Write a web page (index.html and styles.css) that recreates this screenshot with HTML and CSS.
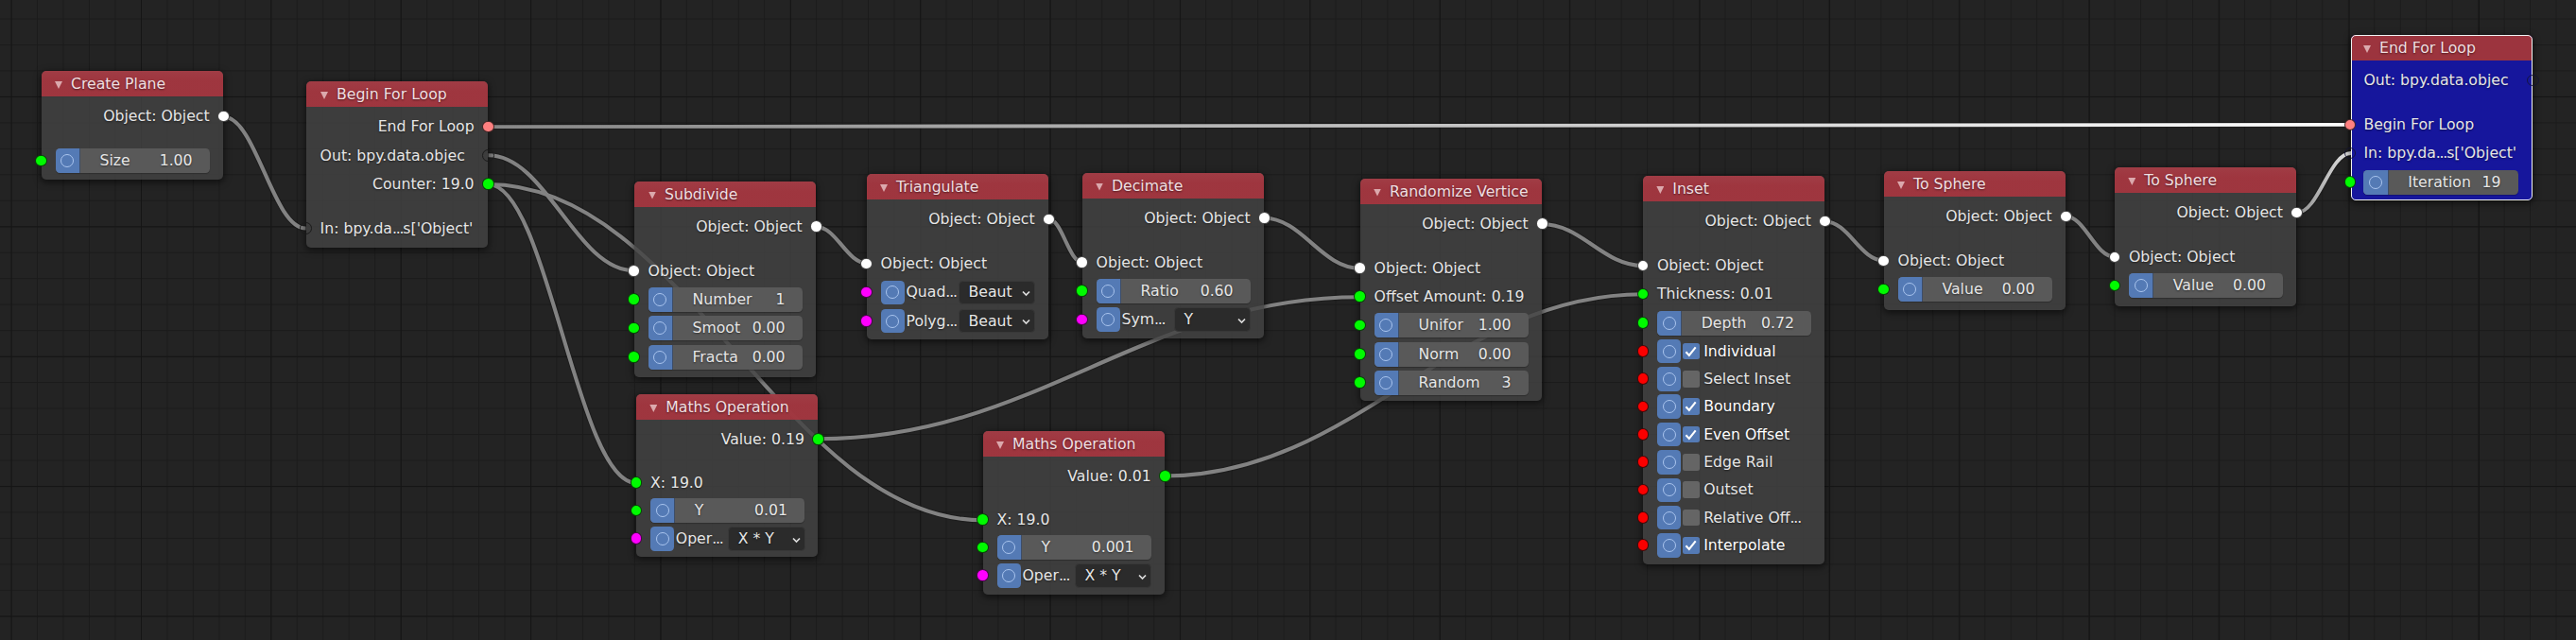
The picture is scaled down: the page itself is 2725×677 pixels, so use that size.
FILE: index.html
```
<!DOCTYPE html>
<html lang="en">
<head>
<meta charset="utf-8">
<title>Node Editor</title>
<link rel="stylesheet" href="styles.css">
</head>
<body>
<main class="canvas">
  <svg class="links" width="2725" height="677" viewBox="0 0 2725 677">
    <defs>
      <linearGradient id="fadeLoop" gradientUnits="userSpaceOnUse" x1="516" y1="0" x2="2487" y2="0">
        <stop offset="0" stop-color="#868686"/><stop offset="1" stop-color="#ffffff"/>
      </linearGradient>
      <linearGradient id="fadeIn" gradientUnits="userSpaceOnUse" x1="2430" y1="0" x2="2487" y2="0">
        <stop offset="0" stop-color="#8c8c8c"/><stop offset="1" stop-color="#e8e8e8"/>
      </linearGradient>
      <g id="wires">
        <path d="M236 123.3C271 123.3 288.5 241.5 323.5 241.5"/>
        <path d="M516.5 164.3C578.3 164.3 609.2 286.3 671 286.3"/>
        <path d="M516.5 195C579.1 195 610.4 511 673 511"/>
        <path d="M516.5 195C725.8 195 830.5 550.3 1039.8 550.3"/>
        <path d="M863.5 240C884.9 240 895.6 278.3 917 278.3"/>
        <path d="M1109 231.5C1123.4 231.5 1130.6 277.5 1145 277.5"/>
        <path d="M1336.5 230.5C1377.3 230.5 1397.7 283.7 1438.5 283.7"/>
        <path d="M866 464.3C1095 464.3 1209.5 314.3 1438.5 314.3"/>
        <path d="M1232 503.5C1434.4 503.5 1535.6 311.3 1738 311.3"/>
        <path d="M1630.7 237C1673.6 237 1695.1 281 1738 281"/>
        <path d="M1930.5 234.3C1955.3 234.3 1967.7 275.5 1992.5 275.5"/>
        <path d="M2184.8 228.7C2205.7 228.7 2216.1 271.7 2237 271.7"/>
      </g>
      <g id="active">
        <path stroke="url(#fadeLoop)" d="M516.5 134.1L2487 131.8L2487 131.9"/>
        <path stroke="url(#fadeIn)" d="M2429.7 225C2452.6 225 2464.1 162 2487 162"/>
      </g>
      <g id="active-edge">
        <path d="M516.5 134.1L2487 131.8"/>
        <path d="M2429.7 225C2452.6 225 2464.1 162 2487 162"/>
      </g>
    </defs>
    <use href="#wires" class="edge"/>
    <use href="#active-edge" class="edge"/>
    <use href="#wires" class="wire"/>
    <use href="#active" class="wire-active"/>
  </svg>

  <section class="node n-plane">
    <header class="head"><i class="tri"></i>Create Plane</header>
    <div class="outs">
      <div class="row out">Object: Object<b class="sock white"></b></div>
    </div>
    <div class="ins">
      <div class="row"><b class="sock green"></b><div class="field"><i class="tog"></i><span>Size</span><span>1.00</span></div></div>
    </div>
  </section>

  <section class="node n-begin">
    <header class="head"><i class="tri"></i>Begin For Loop</header>
    <div class="outs">
      <div class="row out">End For Loop<b class="sock pink"></b></div>
      <div class="row cut">Out: bpy.data.objec<b class="sock hollow right"></b></div>
      <div class="row out">Counter: 19.0<b class="sock green"></b></div>
    </div>
    <div class="ins">
      <div class="row"><b class="sock hollow"></b>In: bpy.da<em>...</em>s['Object'</div>
    </div>
  </section>

  <section class="node n-subdivide">
    <header class="head"><i class="tri"></i>Subdivide</header>
    <div class="outs">
      <div class="row out">Object: Object<b class="sock white"></b></div>
    </div>
    <div class="ins">
      <div class="row"><b class="sock white"></b>Object: Object</div>
      <div class="row"><b class="sock green"></b><div class="field"><i class="tog"></i><span>Number</span><span>1</span></div></div>
      <div class="row"><b class="sock green"></b><div class="field"><i class="tog"></i><span>Smoot</span><span>0.00</span></div></div>
      <div class="row"><b class="sock green"></b><div class="field"><i class="tog"></i><span>Fracta</span><span>0.00</span></div></div>
    </div>
  </section>

  <section class="node maths n-maths-a">
    <header class="head"><i class="tri"></i>Maths Operation</header>
    <div class="outs">
      <div class="row out">Value: 0.19<b class="sock green"></b></div>
    </div>
    <div class="ins">
      <div class="row"><b class="sock green"></b>X: 19.0</div>
      <div class="row"><b class="sock green"></b><div class="field"><i class="tog"></i><span>Y</span><span>0.01</span></div></div>
      <div class="row"><b class="sock magenta"></b><i class="tog"></i><span class="name">Oper<em>...</em></span><div class="menu">X * Y<svg width="9" height="7" viewBox="0 0 9 7"><path d="M1 1.5L4.5 5L8 1.5"/></svg></div></div>
    </div>
  </section>

  <section class="node maths n-maths-b">
    <header class="head"><i class="tri"></i>Maths Operation</header>
    <div class="outs">
      <div class="row out">Value: 0.01<b class="sock green"></b></div>
    </div>
    <div class="ins">
      <div class="row"><b class="sock green"></b>X: 19.0</div>
      <div class="row"><b class="sock green"></b><div class="field"><i class="tog"></i><span>Y</span><span>0.001</span></div></div>
      <div class="row"><b class="sock magenta"></b><i class="tog"></i><span class="name">Oper<em>...</em></span><div class="menu">X * Y<svg width="9" height="7" viewBox="0 0 9 7"><path d="M1 1.5L4.5 5L8 1.5"/></svg></div></div>
    </div>
  </section>

  <section class="node n-triangulate">
    <header class="head"><i class="tri"></i>Triangulate</header>
    <div class="outs">
      <div class="row out">Object: Object<b class="sock white"></b></div>
    </div>
    <div class="ins">
      <div class="row"><b class="sock white"></b>Object: Object</div>
      <div class="row"><b class="sock magenta"></b><i class="tog"></i><span class="name">Quad<em>...</em></span><div class="menu">Beaut<svg width="9" height="7" viewBox="0 0 9 7"><path d="M1 1.5L4.5 5L8 1.5"/></svg></div></div>
      <div class="row"><b class="sock magenta"></b><i class="tog"></i><span class="name">Polyg<em>...</em></span><div class="menu">Beaut<svg width="9" height="7" viewBox="0 0 9 7"><path d="M1 1.5L4.5 5L8 1.5"/></svg></div></div>
    </div>
  </section>

  <section class="node n-decimate">
    <header class="head"><i class="tri"></i>Decimate</header>
    <div class="outs">
      <div class="row out">Object: Object<b class="sock white"></b></div>
    </div>
    <div class="ins">
      <div class="row"><b class="sock white"></b>Object: Object</div>
      <div class="row"><b class="sock green"></b><div class="field"><i class="tog"></i><span>Ratio</span><span>0.60</span></div></div>
      <div class="row"><b class="sock magenta"></b><i class="tog"></i><span class="name">Sym<em>...</em></span><div class="menu">Y<svg width="9" height="7" viewBox="0 0 9 7"><path d="M1 1.5L4.5 5L8 1.5"/></svg></div></div>
    </div>
  </section>

  <section class="node n-randomize">
    <header class="head"><i class="tri"></i>Randomize Vertice</header>
    <div class="outs">
      <div class="row out">Object: Object<b class="sock white"></b></div>
    </div>
    <div class="ins">
      <div class="row"><b class="sock white"></b>Object: Object</div>
      <div class="row"><b class="sock green"></b>Offset Amount: 0.19</div>
      <div class="row"><b class="sock green"></b><div class="field"><i class="tog"></i><span>Unifor</span><span>1.00</span></div></div>
      <div class="row"><b class="sock green"></b><div class="field"><i class="tog"></i><span>Norm</span><span>0.00</span></div></div>
      <div class="row"><b class="sock green"></b><div class="field"><i class="tog"></i><span>Random</span><span>3</span></div></div>
    </div>
  </section>

  <section class="node n-inset">
    <header class="head"><i class="tri"></i>Inset</header>
    <div class="outs">
      <div class="row out">Object: Object<b class="sock white"></b></div>
    </div>
    <div class="ins">
      <div class="row"><b class="sock white"></b>Object: Object</div>
      <div class="row"><b class="sock green"></b>Thickness: 0.01</div>
      <div class="row"><b class="sock green"></b><div class="field"><i class="tog"></i><span>Depth</span><span>0.72</span></div></div>
      <div class="row check on"><b class="sock red"></b><i class="tog"></i><svg class="box" viewBox="0 0 18 18"><path d="M3.5 9.5L7 13.2L14 4.5"/></svg>Individual</div>
      <div class="row check"><b class="sock red"></b><i class="tog"></i><i class="box"></i>Select Inset</div>
      <div class="row check on"><b class="sock red"></b><i class="tog"></i><svg class="box" viewBox="0 0 18 18"><path d="M3.5 9.5L7 13.2L14 4.5"/></svg>Boundary</div>
      <div class="row check on"><b class="sock red"></b><i class="tog"></i><svg class="box" viewBox="0 0 18 18"><path d="M3.5 9.5L7 13.2L14 4.5"/></svg>Even Offset</div>
      <div class="row check"><b class="sock red"></b><i class="tog"></i><i class="box"></i>Edge Rail</div>
      <div class="row check"><b class="sock red"></b><i class="tog"></i><i class="box"></i>Outset</div>
      <div class="row check"><b class="sock red"></b><i class="tog"></i><i class="box"></i>Relative Off<em>...</em></div>
      <div class="row check on"><b class="sock red"></b><i class="tog"></i><svg class="box" viewBox="0 0 18 18"><path d="M3.5 9.5L7 13.2L14 4.5"/></svg>Interpolate</div>
    </div>
  </section>

  <section class="node n-sphere-a">
    <header class="head"><i class="tri"></i>To Sphere</header>
    <div class="outs">
      <div class="row out">Object: Object<b class="sock white"></b></div>
    </div>
    <div class="ins">
      <div class="row"><b class="sock white"></b>Object: Object</div>
      <div class="row"><b class="sock green"></b><div class="field"><i class="tog"></i><span>Value</span><span>0.00</span></div></div>
    </div>
  </section>

  <section class="node n-sphere-b">
    <header class="head"><i class="tri"></i>To Sphere</header>
    <div class="outs">
      <div class="row out">Object: Object<b class="sock white"></b></div>
    </div>
    <div class="ins">
      <div class="row"><b class="sock white"></b>Object: Object</div>
      <div class="row"><b class="sock green"></b><div class="field"><i class="tog"></i><span>Value</span><span>0.00</span></div></div>
    </div>
  </section>

  <section class="node n-end">
    <header class="head"><i class="tri"></i>End For Loop</header>
    <div class="outs">
      <div class="row cut">Out: bpy.data.objec<b class="sock hollow right"></b></div>
    </div>
    <div class="ins">
      <div class="row"><b class="sock pink"></b>Begin For Loop</div>
      <div class="row"><b class="sock hollow"></b>In: bpy.da<em>...</em>s['Object'</div>
      <div class="row"><b class="sock green"></b><div class="field"><i class="tog"></i><span>Iteration</span><span>19</span></div></div>
    </div>
  </section>
</main>
</body>
</html>
```
FILE: styles.css
```
*, ::before, ::after { box-sizing: border-box; }

body {
  margin: 0;
  background: #232323;
  color: #e6e6e6;
  font: 15.7px/20px "DejaVu Sans", sans-serif;
}

/* Grid: a fine line every 27.48px, a heavier one every fifth */
.canvas {
  position: relative;
  width: 2725px;
  height: 677px;
  overflow: hidden;
  background-color: #232323;
  background-image:
    linear-gradient(90deg, #151515 1px, transparent 1px),
    linear-gradient(#151515 1px, transparent 1px),
    linear-gradient(90deg, #1b1b1b 1px, transparent 1px),
    linear-gradient(#1b1b1b 1px, transparent 1px);
  background-size: 137.4px 137.4px, 137.4px 137.4px, 27.48px 27.48px, 27.48px 27.48px;
  background-position: 11.6px 0, 0 102px, 11.6px 0, 0 19.5px;
}

.links { position: absolute; inset: 0; fill: none; }
.edge { stroke: #161616; stroke-opacity: .5; stroke-width: 6; }
.wire { stroke: #828282; stroke-width: 4.1; }
.wire-active { stroke-width: 3.8; }

.node {
  position: absolute;
  width: 192px;
  border-radius: 5px;
  background: rgba(67, 67, 67, .82);
  box-shadow: 0 2px 7px 1px rgba(0, 0, 0, .55);
  text-shadow: 0 1px 2px rgba(0, 0, 0, .5);
  white-space: nowrap;
}

.n-plane { left: 44px; top: 75px; height: 115px; }
.n-begin { left: 324px; top: 86px; height: 176px; }
.n-subdivide { left: 671px; top: 191.5px; height: 207.5px; }
.n-maths-a { left: 673.3px; top: 417px; height: 172px; }
.n-maths-b { left: 1040px; top: 456px; height: 173px; }
.n-triangulate { left: 917px; top: 184px; height: 175px; }
.n-decimate { left: 1145px; top: 182.5px; height: 175px; }
.n-randomize { left: 1439px; top: 188.5px; height: 235.5px; }
.n-inset { left: 1738.3px; top: 186px; height: 411px; }
.n-sphere-a { left: 1993px; top: 181px; height: 146.5px; }
.n-sphere-b { left: 2237.3px; top: 177px; height: 147px; }
.n-end { left: 2487px; top: 37px; height: 175px; background: #16169c; }
.n-end::after {
  content: "";
  position: absolute;
  inset: 0;
  border: 1px solid #f2f2f2;
  border-radius: 5px;
}

.head {
  display: flex;
  align-items: center;
  height: 27px;
  padding: 1px 0 0 14px;
  border-radius: 5px 5px 0 0;
  background: linear-gradient(rgba(174, 60, 70, .88), rgba(169, 53, 63, .9) 40%);
  color: #f0dfe0;
}
.n-begin .head, .n-subdivide .head { padding-left: 15px; }
.n-end .head { padding-left: 13px; background: #9c343e; }

.tri {
  width: 8px;
  height: 8px;
  margin: 2px 9px 0 0;
  background: #dba9ad;
  clip-path: polygon(0 0, 100% 0, 50% 100%);
}

.outs { padding-top: 5.8px; }
.ins { padding-top: 16.4px; }
.n-plane .ins { padding-top: 16.6px; }
.n-maths-a .ins, .n-maths-b .ins { padding-top: 16.2px; }

.row {
  position: relative;
  display: flex;
  align-items: center;
  height: 30.3px;
  padding: 1px 0 0 14.6px;
}
.maths .row { height: 29.6px; }
.row.check { height: 29.35px; }
.n-end .row { padding-left: 13.4px; }
.row.out { justify-content: flex-end; padding-right: 14.4px; }
.on { color: #ffffff; }

.row em { font-style: normal; letter-spacing: -1.2px; }

.sock {
  position: absolute;
  left: -6.6px;
  top: calc(50% - 6.1px);
  z-index: 1;
  width: 12.6px;
  height: 12.6px;
  border: 1px solid rgba(10, 10, 10, .75);
  border-radius: 50%;
}
.out .sock, .sock.right { left: auto; right: -6.5px; }
.white { background: #ffffff; }
.green { background: #00fb00; }
.magenta { background: #ff00ff; }
.red { background: #fb0000; }
.pink { background: #ff8080; }
.hollow { border-color: #1b1b1b; }
.n-end .sock { left: -7.3px; }
.n-end .sock.right { left: auto; }
.n-end .hollow { border-color: rgba(20, 20, 50, .85); }

.tog {
  display: flex;
  flex: none;
  align-items: center;
  justify-content: center;
  width: 25.5px;
  height: 25.5px;
  border-radius: 4.5px;
  background: #547ab5;
}
.tog::before {
  content: "";
  width: 14px;
  height: 14px;
  border: 1.5px solid #a9c4ee;
  border-radius: 50%;
}

.field {
  display: flex;
  align-items: center;
  width: 163.5px;
  height: 26px;
  padding-right: 18.5px;
  border-radius: 4.5px;
  background: #595959;
  box-shadow: 0 1px 1px rgba(0, 0, 0, .25);
}
.field .tog {
  height: 26px;
  margin-right: 21.4px;
  border-radius: 4.5px 0 0 4.5px;
  box-shadow: 1px 0 #3d4d68;
}
.field span:last-child { margin-left: auto; }

.name { width: 56.9px; padding-left: 1.4px; }
.menu {
  display: flex;
  align-items: center;
  justify-content: space-between;
  width: 81.5px;
  height: 25.5px;
  padding: 0 4px 0 9.5px;
  border: 1px solid #383838;
  border-radius: 4.5px;
  background: #2b2b2b;
}
.menu svg {
  margin-top: 2px;
  fill: none;
  stroke: #dddddd;
  stroke-width: 1.7;
}

.box {
  flex: none;
  width: 17.6px;
  height: 17.6px;
  margin: 0 4.4px 0 1.8px;
  border-radius: 2.5px;
  background: #656565;
}
.on .box {
  background: #547ab5;
  fill: none;
  stroke: #ffffff;
  stroke-width: 2.2;
}
```
